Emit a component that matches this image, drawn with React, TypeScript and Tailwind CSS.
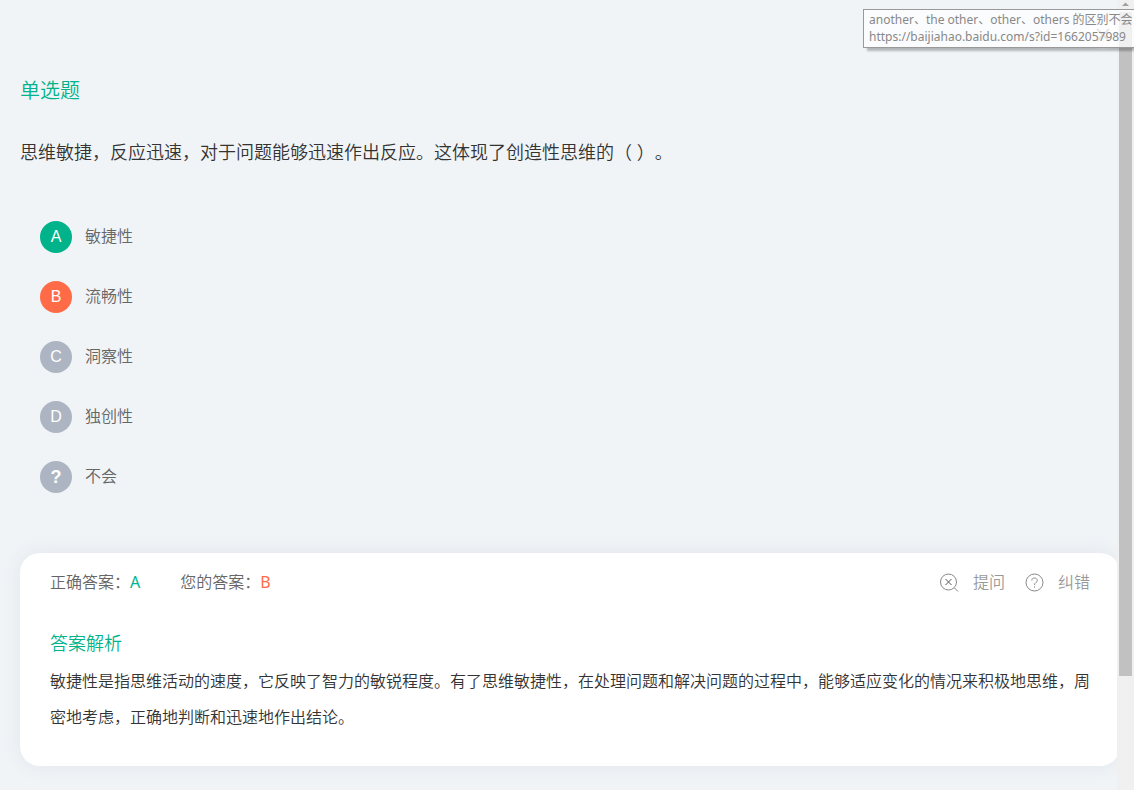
import { ReactNode } from "react";
import clsx from "clsx";

const options = [
  { letter: "A", text: "敏捷性", status: "correct" },
  { letter: "B", text: "流畅性", status: "wrong" },
  { letter: "C", text: "洞察性", status: "idle" },
  { letter: "D", text: "独创性", status: "idle" },
  { letter: "?", text: "不会", status: "idle" },
];

export default function App() {
  return (
    <div className="flex min-h-screen items-stretch overflow-hidden bg-[#f0f4f7] font-['Noto_Sans','Noto_Sans_CJK_SC',sans-serif] font-[350] text-[#333] [text-spacing-trim:space-all]">
      <main className="min-w-0 flex-1 overflow-hidden pt-[76px] pb-6 pl-5">
        <h1 className="text-xl leading-[30px] font-[350] text-[#00b38a]">单选题</h1>
        <p className="mt-[30px] text-lg leading-8">
          思维敏捷，反应迅速，对于问题能够迅速作出反应。这体现了创造性思维的（ ）。
        </p>

        <fieldset
          aria-label="选项"
          className="mt-[53px] flex flex-col items-start gap-7 pl-5"
        >
          {options.map((option) => (
            <OptionRow key={option.letter} {...option} />
          ))}
        </fieldset>

        {/* Answer card, runs under the scrollbar on the right */}
        <section className="mt-[60px] -mr-[3px] rounded-[20px] bg-white px-[30px] pt-[13px] pb-[31px] shadow-[0_0_20px_rgba(60,80,100,0.08)]">
          <div className="flex items-center leading-8 text-[#666]">
            <span>
              正确答案：<span className="font-normal text-[#00b38a]">A</span>
            </span>
            <span className="ml-10">
              您的答案：<span className="font-normal text-[#ff6b47]">B</span>
            </span>
            <div className="ml-auto flex items-center gap-5 text-[#999]">
              <ActionButton label="提问">
                <circle cx="8.5" cy="9" r="8" />
                <path d="M14.5 15l3.5 3.5" />
                <path d="M5.5 6l6 6M11.5 6l-6 6" stroke="#555" />
              </ActionButton>
              <ActionButton label="纠错">
                <circle cx="9.5" cy="9.5" r="8.5" />
                <path d="M6.8 7.6C6.8 5.8 8 5 9.5 5s2.8 1 2.8 2.5c0 2-2.8 2-2.8 4.5M9.5 13.3v1.4" />
              </ActionButton>
            </div>
          </div>
          <h2 className="mt-[29px] text-lg leading-8 font-[350] text-[#00b38a]">答案解析</h2>
          <p className="mt-1 leading-9">
            敏捷性是指思维活动的速度，它反映了智力的敏锐程度。有了思维敏捷性，在处理问题和解决问题的过程中，能够适应变化的情况来积极地思维，周密地考虑，正确地判断和迅速地作出结论。
          </p>
        </section>
      </main>

      <Scrollbar />
      <LinkTooltip />
    </div>
  );
}

interface OptionProps {
  letter: string;
  text: string;
  status: string;
}

function OptionRow({ letter, text, status }: OptionProps) {
  return (
    <label className="flex items-start gap-[13px] text-[#666]">
      <span
        className={clsx(
          "relative flex size-8 items-center justify-center rounded-full font-['Liberation_Sans',sans-serif] text-white",
          status === "correct" && "bg-[#00b38a]",
          status === "wrong" && "bg-[#ff6b47]",
          status === "idle" && "bg-[#adb5c2]",
          letter === "?" ? "text-lg font-bold" : "font-normal"
        )}
      >
        <input
          type="radio"
          name="answer"
          className="absolute inset-0 appearance-none rounded-full"
          defaultChecked={status === "wrong"}
        />
        {letter}
      </span>
      <span className="leading-[30px]">{text}</span>
    </label>
  );
}

function ActionButton({ label, children }: { label: string; children: ReactNode }) {
  return (
    <button type="button" className="flex items-center gap-[14px]">
      <svg
        viewBox="0 0 19 19"
        className="size-[19px] overflow-visible"
        fill="none"
        stroke="#888"
        strokeWidth="1"
      >
        {children}
      </svg>
      {label}
    </button>
  );
}

function Scrollbar() {
  return (
    <div className="flex w-[17px] shrink-0 flex-col items-center bg-[#f0f0f0]">
      <svg viewBox="0 0 17 12" className="h-3 w-full" fill="#a0a0a0">
        <path d="M5 6l3.5-3.5L12 6z" />
      </svg>
      <div className="h-[664px] w-[13px] bg-[#c1c1c1]" />
    </div>
  );
}

function LinkTooltip() {
  return (
    <>
      {/* close button showing through the tooltip */}
      <div className="absolute top-5 right-4 flex size-[30px] items-center justify-center rounded-full bg-white/60">
        <svg viewBox="0 0 14 14" className="size-[14px]" stroke="#999" strokeWidth="2">
          <path d="M1 1l12 12M13 1L1 13" />
        </svg>
      </div>
      <div className="absolute top-[9px] right-0 w-[271px] overflow-hidden border border-r-0 border-[#999] bg-white/75 pt-[1px] pb-[2px] pl-[5px] text-xs leading-[17px] font-normal whitespace-nowrap text-[#888] shadow-[4px_3px_2px_rgba(0,0,0,0.25)]">
        <p>another、the other、other、others 的区别不会</p>
        <p>https://baijiahao.baidu.com/s?id=1662057989</p>
      </div>
    </>
  );
}
